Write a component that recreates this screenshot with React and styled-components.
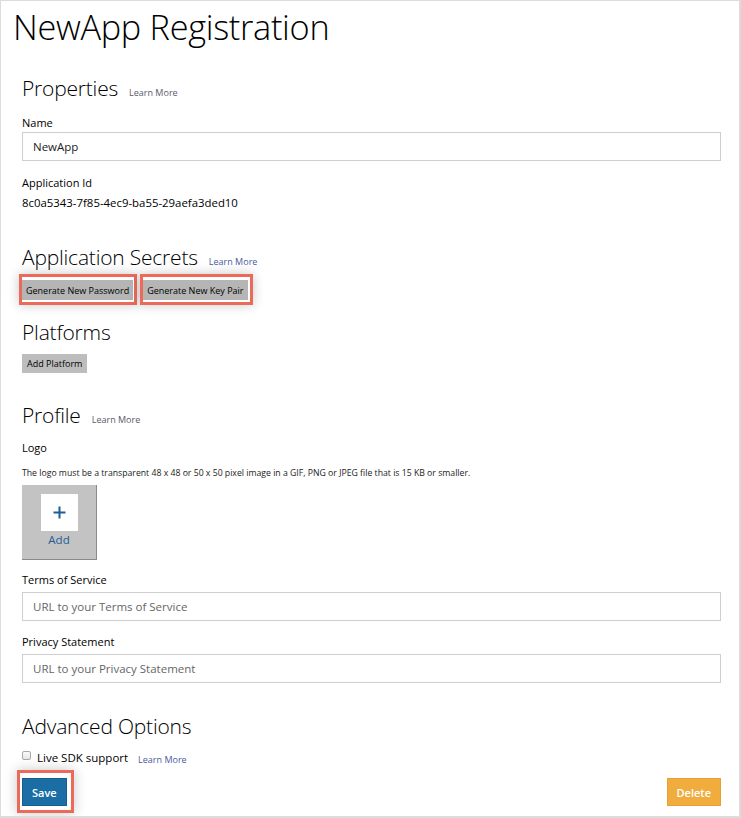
import React from "react";
import styled, { createGlobalStyle } from "styled-components";

const Global = createGlobalStyle`
  html, body { margin: 0; padding: 0; background: #fff; }
  body { font-family: "Open Sans", "Noto Sans", sans-serif; color: #000; }
  * { box-sizing: border-box; }
`;

const Frame = styled.div`
  width: 741px;
  height: 818px;
  border: 1px solid #dcdcdc;
  border-right-width: 2px;
  border-bottom-width: 2px;
  overflow: hidden;
  display: flex;
  flex-direction: column;
`;

const Title = styled.h1`
  margin: 5px 0 0 12px;
  font-family: "Open Sans", sans-serif;
  font-weight: 300;
  font-size: 34.3px;
  line-height: 42px;
  letter-spacing: -0.3px;
`;

const Content = styled.div`
  padding: 0 18px 0 21px;
  display: flex;
  flex-direction: column;
`;

const SectionHead = styled.div`
  display: flex;
  align-items: baseline;
  gap: 11px;
  margin-top: ${(p) => p.$top}px;
`;

const H2 = styled.h2`
  margin: 0;
  font-weight: 300;
  font-size: 21px;
  line-height: 30px;
  letter-spacing: -0.2px;
`;

const LearnMore = styled.a`
  font-size: 9px;
  color: ${(p) => (p.$blue ? "#4a5a9e" : "#5a5a6a")};
  text-decoration: none;
`;

const Label = styled.div`
  font-size: 11px;
  line-height: 16px;
  margin-top: ${(p) => p.$top || 0}px;
`;

const Value = styled.div`
  font-size: 11.4px;
  line-height: 16px;
  margin-top: ${(p) => p.$top || 0}px;
`;

const Input = styled.input`
  display: block;
  width: 100%;
  height: 29px;
  margin-top: ${(p) => p.$top || 0}px;
  border: 1px solid #cfcfcf;
  padding: 0 10px;
  font-family: "Open Sans", sans-serif;
  font-size: 11.5px;
  color: #222;
  outline: none;
  &::placeholder { color: #666; }
`;

const ButtonRow = styled.div`
  display: flex;
  gap: 3px;
  margin-top: ${(p) => p.$top || 0}px;
  margin-left: ${(p) => p.$ml || 0}px;
`;

const Highlight = styled.div`
  border: 3px solid #ec6a5a;
  padding: ${(p) => p.$pad};
  box-shadow: 0 0 12px rgba(0, 0, 0, 0.22);
  display: flex;
`;

const GrayButton = styled.button`
  background: ${(p) => p.$bg || "#b5b5b5"};
  border: none;
  padding: 0 ${(p) => p.$px || 4}px;
  height: ${(p) => p.$h || 20}px;
  font-family: "Open Sans", sans-serif;
  font-size: 9px;
  color: #000;
  cursor: pointer;
`;

const Desc = styled.div`
  font-size: 8.7px;
  line-height: 12px;
  color: #222;
  margin-top: 11px;
`;

const LogoBox = styled.div`
  width: 75px;
  height: 75px;
  margin-top: 6px;
  background: #c3c3c3;
  border-right: 1px solid #8a8a8a;
  border-bottom: 1px solid #8a8a8a;
  display: flex;
  flex-direction: column;
  align-items: center;
  padding-top: 9px;
`;

const PlusTile = styled.div`
  width: 37px;
  height: 37px;
  background: #fff;
  display: flex;
  align-items: center;
  justify-content: center;
`;

const AddText = styled.div`
  color: #1d5d96;
  font-size: 11.5px;
  line-height: 14px;
  margin-top: 2px;
`;

const CheckRow = styled.label`
  display: flex;
  align-items: center;
  gap: 6px;
  margin-top: 8px;
  font-size: 11.5px;
`;

const Check = styled.span`
  width: 9px;
  height: 9px;
  border: 1px solid #a8a8a8;
  border-radius: 2px;
  background: linear-gradient(#fafafa, #e6e6e6);
  margin-top: -4px;
`;

const Footer = styled.div`
  display: flex;
  justify-content: space-between;
  align-items: flex-start;
  margin-top: 4px;
  margin-left: -5px;
`;

const SolidButton = styled.button`
  background: ${(p) => p.$bg};
  border: 1px solid ${(p) => p.$border};
  color: #fff;
  font-family: "Open Sans", sans-serif;
  font-weight: 600;
  font-size: 11px;
  height: 28px;
  padding: 0 ${(p) => p.$px}px;
  margin-top: ${(p) => p.$mt || 0}px;
`;

export default function App() {
  return (
    <>
      <Global />
      <Frame>
        <Title>NewApp Registration</Title>
        <Content>
          <SectionHead $top={25}>
            <H2>Properties</H2>
            <LearnMore>Learn More</LearnMore>
          </SectionHead>
          <Label $top={12}>Name</Label>
          <Input $top={1} defaultValue="NewApp" />
          <Label $top={14}>Application Id</Label>
          <Value $top={4}>8c0a5343-7f85-4ec9-ba55-29aefa3ded10</Value>
          <SectionHead $top={31}>
            <H2>Application Secrets</H2>
            <LearnMore $blue>Learn More</LearnMore>
          </SectionHead>
          <ButtonRow $top={2} $ml={-3}>
            <Highlight $pad="3px 1px 2px 0">
              <GrayButton>Generate New Password</GrayButton>
            </Highlight>
            <Highlight $pad="3px 2px 2px 0">
              <GrayButton>Generate New Key Pair</GrayButton>
            </Highlight>
          </ButtonRow>
          <SectionHead $top={12}>
            <H2>Platforms</H2>
          </SectionHead>
          <ButtonRow $top={7}>
            <GrayButton $bg="#bdbdbd" $px={5} $h={19}>Add Platform</GrayButton>
          </ButtonRow>
          <SectionHead $top={27}>
            <H2>Profile</H2>
            <LearnMore>Learn More</LearnMore>
          </SectionHead>
          <Label $top={10}>Logo</Label>
          <Desc>
            The logo must be a transparent 48 x 48 or 50 x 50 pixel image in a GIF, PNG or JPEG file that is 15 KB or smaller.
          </Desc>
          <LogoBox>
            <PlusTile>
              <svg width="13" height="13" viewBox="0 0 13 13">
                <path d="M6.5 0.5v12M0.5 6.5h12" stroke="#1d5d96" strokeWidth="2" />
              </svg>
            </PlusTile>
            <AddText>Add</AddText>
          </LogoBox>
          <Label $top={12}>Terms of Service</Label>
          <Input $top={4} placeholder="URL to your Terms of Service" />
          <Label $top={13}>Privacy Statement</Label>
          <Input $top={4} placeholder="URL to your Privacy Statement" />
          <SectionHead $top={28}>
            <H2>Advanced Options</H2>
          </SectionHead>
          <CheckRow>
            <Check />
            <span>Live SDK support</span>
            <LearnMore $blue style={{ marginLeft: 4, marginTop: 4 }}>Learn More</LearnMore>
          </CheckRow>
          <Footer>
            <Highlight $pad="5px 4px 4px 2px">
              <SolidButton $bg="#1b6ea5" $border="#175d8b" $px={9}>Save</SolidButton>
            </Highlight>
            <SolidButton $bg="#f0ad3e" $border="#e6a033" $px={9} $mt={8}>Delete</SolidButton>
          </Footer>
        </Content>
      </Frame>
    </>
  );
}
